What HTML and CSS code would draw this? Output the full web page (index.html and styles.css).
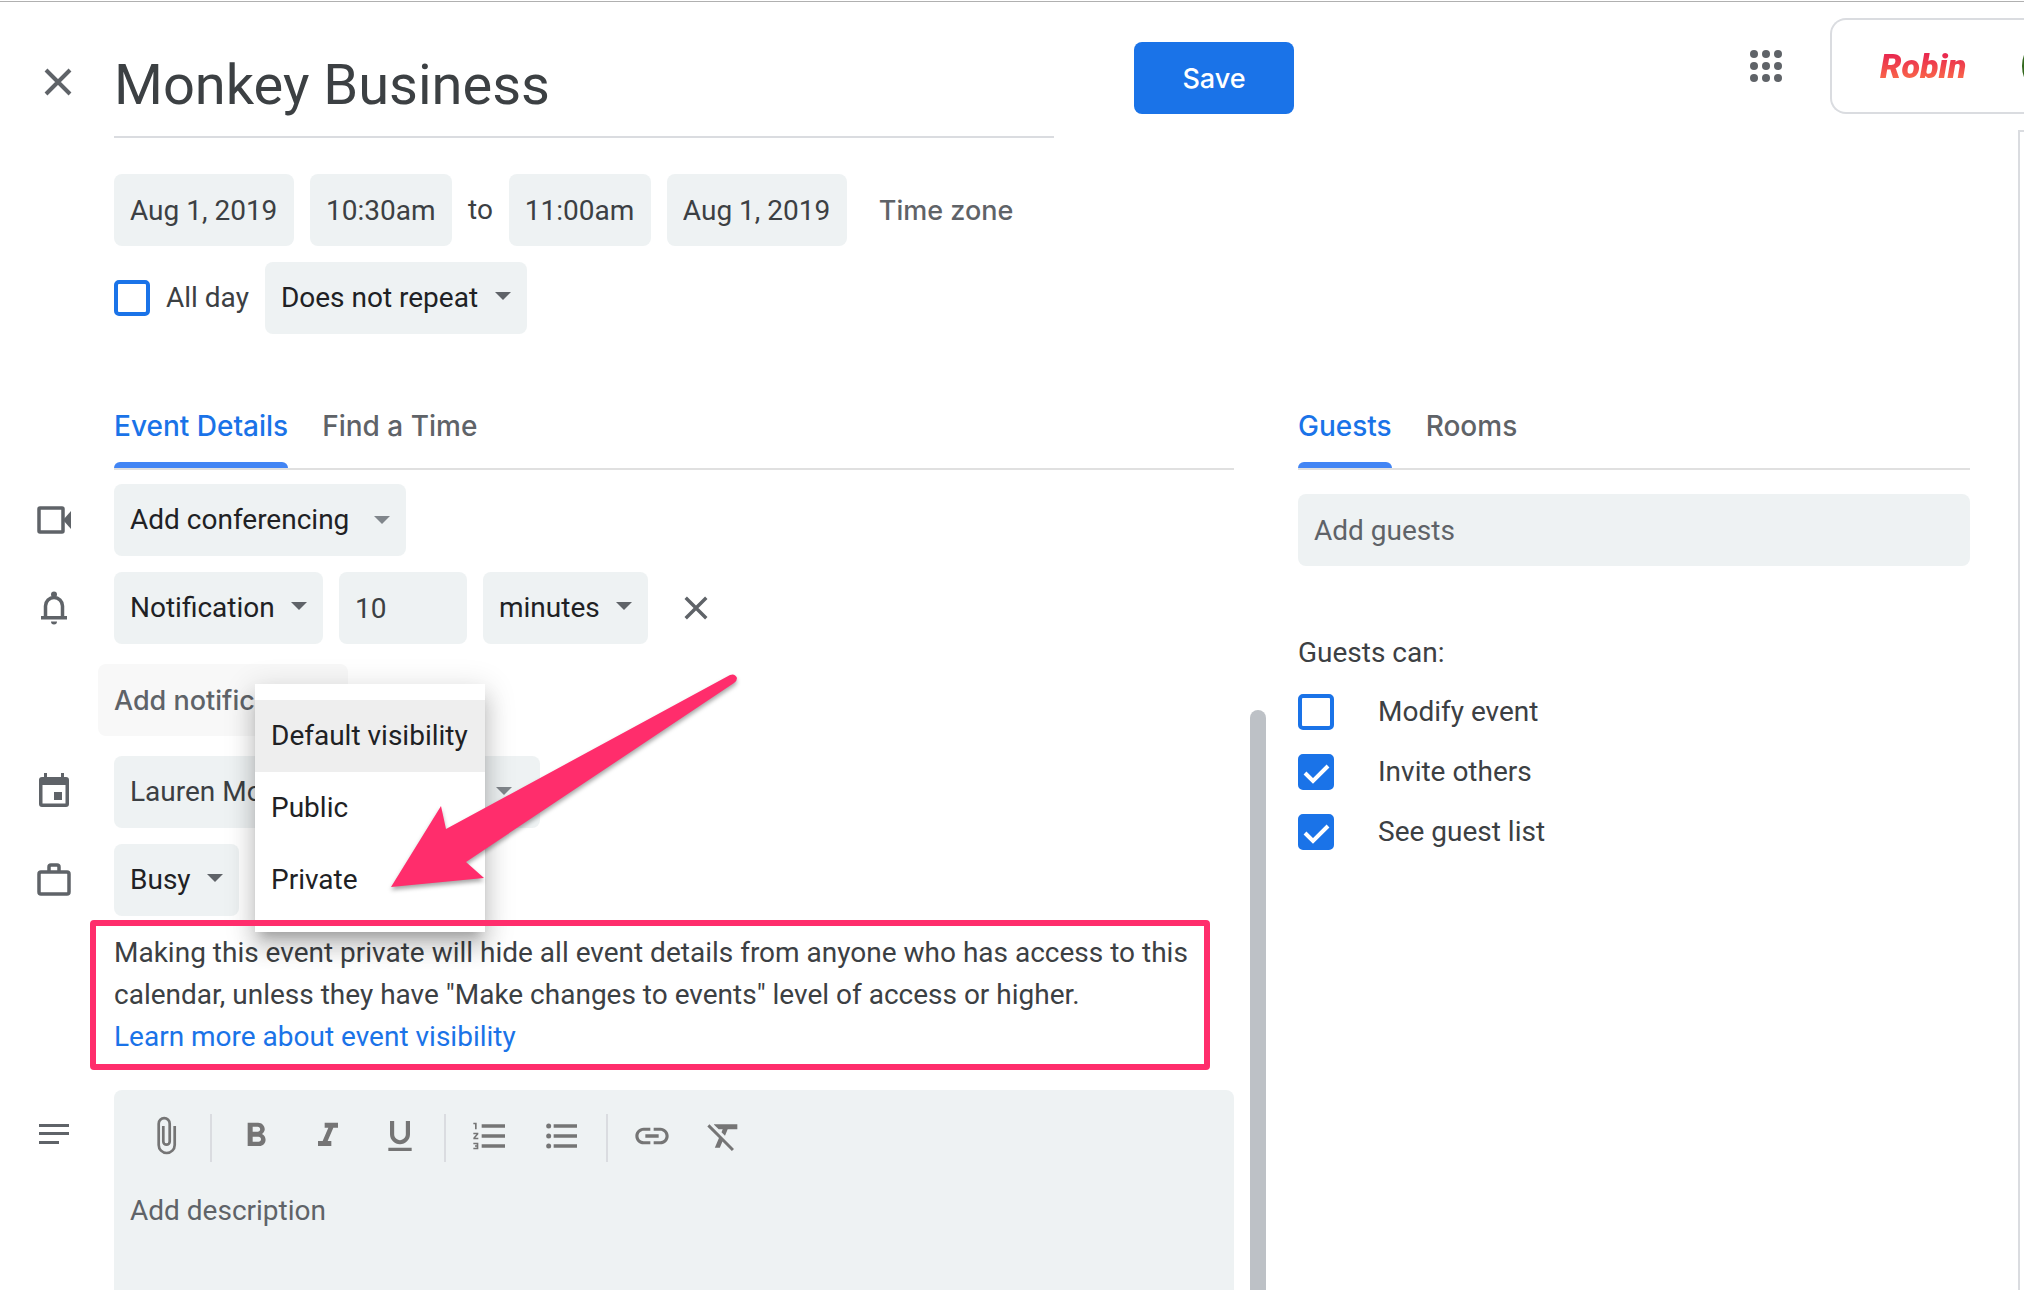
FILE: index.html
```
<!DOCTYPE HTML>
<html lang="en">
<head>
<meta charset="utf-8">
<title>Monkey Business</title>
<link rel="stylesheet" href="styles.css">
</head>

<body>
<div class="page">
	<header class="header">
		<button class="close" type="button" aria-label="Close">
			<svg width="28" height="28" viewBox="0 0 28 28"><path d="M2 2l24 24M26 2L2 26"/></svg>
		</button>
		<input class="title" type="text" value="Monkey Business" aria-label="Title">
		<button class="save" type="button">Save</button>
		<button class="apps" type="button" aria-label="Apps">
			<svg width="32" height="32" viewBox="0 0 32 32">
				<circle cx="4" cy="4" r="4"/><circle cx="16" cy="4" r="4"/><circle cx="28" cy="4" r="4"/>
				<circle cx="4" cy="16" r="4"/><circle cx="16" cy="16" r="4"/><circle cx="28" cy="16" r="4"/>
				<circle cx="4" cy="28" r="4"/><circle cx="16" cy="28" r="4"/><circle cx="28" cy="28" r="4"/>
			</svg>
		</button>
		<div class="account">
			<span class="brand">Robin</span>
			<span class="avatar"></span>
		</div>
	</header>

	<div class="body">
		<main class="main">
			<section class="schedule">
				<div class="line">
					<input class="field date" type="text" value="Aug 1, 2019" aria-label="Start date">
					<input class="field time" type="text" value="10:30am" aria-label="Start time">
					<span>to</span>
					<input class="field time" type="text" value="11:00am" aria-label="End time">
					<input class="field date" type="text" value="Aug 1, 2019" aria-label="End date">
					<button class="flat" type="button">Time zone</button>
				</div>
				<div class="line">
					<label class="check"><input type="checkbox">All day</label>
					<select class="field" aria-label="Repeat"><option>Does not repeat</option></select>
				</div>
			</section>

			<div class="columns">
				<section class="details">
					<nav class="tabs">
						<button class="tab ac" type="button">Event Details</button>
						<button class="tab" type="button">Find a Time</button>
					</nav>

					<div class="row">
						<svg class="icon" viewBox="0 0 40 40"><rect class="stroke" x="5" y="8" width="24" height="24" rx="1"/><path d="M29 20l8-9v18z"/></svg>
						<div class="line">
							<select class="field light conf" aria-label="Conferencing"><option>Add conferencing</option></select>
						</div>
					</div>

					<div class="row">
						<svg class="icon" viewBox="0 0 40 40"><path class="stroke" d="M11.500 29V18a8.500 8.500 0 0 1 17 0v11"/><path d="M7 28h26v3.500H7zM17 33.500h6a3 3 0 0 1-6 0z"/><circle cx="20" cy="6.500" r="3"/></svg>
						<div class="line">
							<select class="field" aria-label="Notification type"><option>Notification</option></select>
							<input class="field number" type="text" value="10" aria-label="Amount">
							<select class="field" aria-label="Unit"><option>minutes</option></select>
							<button class="remove" type="button" aria-label="Remove notification">
								<svg width="24" height="24" viewBox="0 0 28 28"><path d="M2 2l24 24M26 2L2 26"/></svg>
							</button>
						</div>
					</div>

					<div class="row add">
						<button class="flat" type="button">Add notification</button>
					</div>

					<div class="row">
						<svg class="icon" viewBox="0 0 40 40"><path d="M10 1h3v4h14V1h3v4h2a3 3 0 0 1 3 3v24a3 3 0 0 1-3 3H8a3 3 0 0 1-3-3V8a3 3 0 0 1 3-3h2zM8.500 13v18.500h23V13z"/><path d="M20 20h8v8h-8z"/></svg>
						<div class="line">
							<select class="field light calendar" aria-label="Calendar"><option>Lauren Mo</option></select>
						</div>
					</div>

					<div class="row">
						<svg class="icon" viewBox="0 0 40 40"><rect class="stroke" x="5" y="12" width="30" height="22" rx="2"/><path class="stroke" d="M15 12V7q0-2 2-2h6q2 0 2 2v5"/></svg>
						<div class="line">
							<select class="field" aria-label="Show as"><option>Busy</option></select>
							<!-- 可见性下拉菜单 -->
							<div class="visibility">
								<ul class="menu">
									<li><button class="ac" type="button">Default visibility</button></li>
									<li><button type="button">Public</button></li>
									<li><button type="button">Private</button></li>
								</ul>
								<svg class="arrow" width="360" height="230" viewBox="0 0 360 230"><path d="M6 219L56 138L61 161L345 7Q350 5 352 10Q352 13 349 15L81 194L99 210Z"/></svg>
							</div>
						</div>
					</div>

					<div class="note">
						<p>Making this event private will hide all event details from anyone who has access to this calendar, unless they have "Make changes to events" level of access or higher.</p>
						<a href="#">Learn more about event visibility</a>
					</div>

					<div class="row description">
						<svg class="icon" viewBox="0 0 40 40"><path d="M5 10h30v3H5zM5 18h30v3H5zM5 27h20v3H5z"/></svg>
						<div class="editor">
							<div class="toolbar">
								<button type="button" aria-label="Attach file"><svg width="48" height="48" viewBox="0 0 48 48"><path class="clip" d="M32.700 14v19a8 8 0 0 1-16 0V11.700a5.500 5.500 0 0 1 11 0v17.800a3.200 3.200 0 0 1-6.400 0V14"/></svg></button>
								<i></i>
								<button type="button" aria-label="Bold"><svg width="40" height="40" viewBox="0 0 24 24"><path d="M15.600 10.790c.97-.67 1.650-1.770 1.650-2.790 0-2.260-1.750-4-4-4H7v14h7.040c2.090 0 3.710-1.700 3.710-3.790 0-1.520-.86-2.820-2.150-3.420zM10 6.500h3c.83 0 1.500.67 1.500 1.500s-.67 1.500-1.500 1.500h-3v-3zm3.500 9H10v-3h3.500c.83 0 1.500.67 1.500 1.500s-.67 1.500-1.500 1.500z"/></svg></button>
								<button type="button" aria-label="Italic"><svg width="40" height="40" viewBox="0 0 24 24"><path d="M10 4v3h2.210l-3.420 8H6v3h8v-3h-2.210l3.420-8H18V4z"/></svg></button>
								<button type="button" aria-label="Underline"><svg width="40" height="40" viewBox="0 0 24 24"><path d="M12 17c3.310 0 6-2.690 6-6V3h-2.500v8c0 1.930-1.570 3.500-3.500 3.500S8.500 12.930 8.500 11V3H6v8c0 3.310 2.690 6 6 6zm-7 2v2h14v-2H5z"/></svg></button>
								<i></i>
								<button type="button" aria-label="Numbered list"><svg width="40" height="40" viewBox="0 0 24 24"><path d="M2 17h2v.5H3v1h1v.5H2v1h3v-4H2v1zm1-9h1V4H2v1h1v3zm-1 3h1.800L2 13.100v.9h3v-1H3.200L5 10.900V10H2v1zm5-6v2h14V5H7zm0 14h14v-2H7v2zm0-6h14v-2H7v2z"/></svg></button>
								<button type="button" aria-label="Bulleted list"><svg width="40" height="40" viewBox="0 0 24 24"><circle cx="4" cy="6" r="1.500"/><circle cx="4" cy="12" r="1.500"/><circle cx="4" cy="18" r="1.500"/><path d="M7 5h14v2H7zM7 11h14v2H7zM7 17h14v2H7z"/></svg></button>
								<i></i>
								<button type="button" aria-label="Link"><svg width="40" height="40" viewBox="0 0 24 24"><path d="M3.900 12c0-1.710 1.390-3.100 3.100-3.100h4V7H7c-2.760 0-5 2.240-5 5s2.240 5 5 5h4v-1.900H7c-1.710 0-3.100-1.390-3.100-3.100zM8 13h8v-2H8v2zm9-6h-4v1.900h4c1.710 0 3.100 1.390 3.100 3.100s-1.390 3.100-3.100 3.100h-4V17h4c2.760 0 5-2.240 5-5s-2.240-5-5-5z"/></svg></button>
								<button type="button" aria-label="Remove formatting"><svg width="40" height="40" viewBox="0 0 24 24"><path d="M3.270 5L2 6.270l6.970 6.970L6.500 19h3l1.570-3.660L16.730 21 18 19.730 3.550 5.270 3.270 5zM6 5v.18L8.820 8h2.400l-.72 1.680 2.100 2.100L14.210 8H20V5H6z"/></svg></button>
							</div>
							<textarea placeholder="Add description" aria-label="Description"></textarea>
						</div>
					</div>
				</section>

				<div class="scrollbar"></div>

				<section class="guests">
					<nav class="tabs">
						<button class="tab ac" type="button">Guests</button>
						<button class="tab" type="button">Rooms</button>
					</nav>
					<input class="field" type="text" placeholder="Add guests" aria-label="Add guests">
					<h2>Guests can:</h2>
					<label class="check"><input type="checkbox">Modify event</label>
					<label class="check"><input type="checkbox" checked>Invite others</label>
					<label class="check"><input type="checkbox" checked>See guest list</label>
				</section>
			</div>
		</main>
		<aside class="rail"></aside>
	</div>
</div>
</body>
</html>
```
FILE: styles.css
```
* {margin:0; padding:0; box-sizing:border-box;}
li{list-style:none;}
button, input, select, textarea {font:inherit; color:inherit; border:0; background:none; outline:0;}
button {cursor:pointer;}
svg {display:block; fill:#5f6368;}

body {font:28px/34px Roboto, sans-serif; color:#3c4043; background:#fff; overflow-x:hidden;}
.page {min-height:100vh; padding-top:1px; display:flex; flex-direction:column;}

/* 顶部 */
.header {border-top:1px solid #b0b0b0; display:flex; align-items:flex-start;}
.close {width:114px; flex:none; margin-top:66px; padding-left:44px;}
.close path, .remove path {fill:none; stroke:#5f6368; stroke-width:4;}
.title {flex:0 1 940px; min-width:0; height:136px; padding-top:32px; font-size:56px; border-bottom:2px solid #dadce0;}
.save {flex:none; width:160px; height:72px; margin:40px 0 0 80px; border-radius:8px; background:#1a73e8; color:#fff; font:500 27px Inter, sans-serif;}
.apps {margin:48px 48px 0 auto;}
.account {flex:none; width:194px; height:96px; margin-top:16px; padding-left:48px; display:flex; align-items:center; justify-content:space-between; overflow:hidden; border:2px solid #dadce0; border-right:0; border-radius:16px 0 0 16px;}
.brand {font-size:34px; font-style:italic; font-weight:900; background:linear-gradient(#e8274f 15%, #f9644a 85%); -webkit-background-clip:text; background-clip:text; color:transparent;}
.avatar {flex:none; width:64px; height:64px; margin-right:-62px; border-radius:50%; background:#33691e;}

.body {flex:1; display:flex;}
.main {flex:1; min-width:0; display:flex; flex-direction:column;}
.rail {width:6px; margin-top:-8px; border:solid #dadce0; border-width:2px 0 0 2px;}

/* 表单控件 */
.line {display:flex; align-items:center; gap:16px;}
.field {height:72px; padding:0 16px; border-radius:8px; background-color:#eef2f3;}
.date {width:180px;}
.time {width:142px;}
.number {width:128px;}
::placeholder {color:#5f6368; opacity:1;}
select.field {appearance:none; padding-right:48px; color:#202124; background-repeat:no-repeat; background-position:right 16px top 30px; background-image:url("data:image/svg+xml,%3Csvg xmlns='http://www.w3.org/2000/svg' width='16' height='8'%3E%3Cpath d='M0 0h16l-8 8z' fill='%235f6368'/%3E%3C/svg%3E");}
select.light {background-position:right 16px center; background-image:url("data:image/svg+xml,%3Csvg xmlns='http://www.w3.org/2000/svg' width='16' height='8'%3E%3Cpath d='M0 0h16l-8 8z' fill='%2380868b'/%3E%3C/svg%3E");}
select.conf {padding-right:56px;}
select.calendar {width:426px; color:#3c4043; background-position:right 28px top 31px;}
.flat {height:72px; padding:0 16px; border-radius:8px; color:#5f6368; font:500 27px Inter, sans-serif;}
.check {display:flex; align-items:center; gap:16px;}
.check input {appearance:none; flex:none; width:36px; height:36px; border:4px solid #1a73e8; border-radius:5px;}
.check input:checked {background:#1a73e8 url("data:image/svg+xml,%3Csvg xmlns='http://www.w3.org/2000/svg' width='36' height='36'%3E%3Cpath d='M7 19l8 8 15-15' fill='none' stroke='%23fff' stroke-width='4'/%3E%3C/svg%3E") center no-repeat; background-origin:border-box;}

.schedule {padding:36px 0 0 114px; display:flex; flex-direction:column; gap:16px;}

.columns {flex:1; margin-top:66px; padding-right:48px; display:grid; grid-template-columns:minmax(0,1234fr) 16px minmax(0,688fr); column-gap:16px;}
.tabs {display:flex; gap:34px; border-bottom:2px solid #e0e0e0;}
.tab {position:relative; padding:9px 0 25px; color:#5f6368; font:500 28px/34px Inter, sans-serif; white-space:nowrap;}
.tab.ac {color:#1a73e8;}
.tab.ac::after {content:""; position:absolute; left:0; right:0; bottom:0; height:6px; border-radius:6px 6px 0 0; background:#4285f4;}

/* 左侧:活动详情 */
.details {display:flex; flex-direction:column; gap:16px;}
.details .tabs {margin:0 0 -2px 114px;}
.row {display:flex; align-items:center;}
.icon {flex:none; width:40px; height:40px; margin:0 40px 0 34px;}
.stroke {fill:none; stroke:#5f6368; stroke-width:3.5;}
.remove {width:64px; height:72px; display:flex; align-items:center; justify-content:center;}
.add {padding-left:98px; margin:4px 0;}
.add .flat {width:250px; background:#f8f8f8; text-align:left; white-space:nowrap;}

.visibility {position:relative; align-self:stretch;}
.menu {position:absolute; left:0; bottom:-16px; z-index:1; width:230px; padding:16px 0; background:#fff; box-shadow:0 10px 10px -6px rgba(0,0,0,.2), 0 16px 20px 2px rgba(0,0,0,.14), 0 6px 28px 4px rgba(0,0,0,.12);}
.menu button {display:block; width:100%; height:72px; padding:0 16px; color:#202124; text-align:left; white-space:nowrap;}
.menu .ac {background:#eee;}
.arrow {position:absolute; left:130px; bottom:18px; z-index:3; fill:#ff2d6c; filter:drop-shadow(0 3px 2px rgba(0,0,0,.35));}

.note {position:relative; margin:0 0 16px 114px; line-height:42px;}
.note::after {content:""; position:absolute; inset:-12px 24px -12px -24px; z-index:2; border:6px solid #ff2d6c; border-radius:4px; pointer-events:none;}
.note a {color:#1a73e8; text-decoration:none;}

.description {flex:1; align-items:stretch;}
.description .icon {margin-top:24px;}
.editor {flex:1; min-width:0; display:flex; flex-direction:column; padding:24px 16px 0; border-radius:8px 8px 0 0; background:#eef2f3;}
.toolbar {display:flex;}
.toolbar button {width:72px; height:44px; display:flex; align-items:center; justify-content:center;}
.toolbar svg {flex:none; fill:#757575;}
.toolbar i {width:2px; height:48px; margin:0 8px; background:#dadce0;}
.clip {fill:none; stroke:#757575; stroke-width:2.7;}
.editor textarea {flex:1; margin-top:32px; resize:none;}

.scrollbar {margin-top:310px; border-radius:8px 8px 0 0; background:#bdc1c6;}

/* 右侧:邀请对象 */
.guests {padding-left:16px;}
.guests .field {width:100%; margin-top:24px;}
.guests h2 {margin-top:70px; font-size:28px; font-weight:400;}
.guests .check {margin-top:24px; gap:44px; line-height:36px;}
```
